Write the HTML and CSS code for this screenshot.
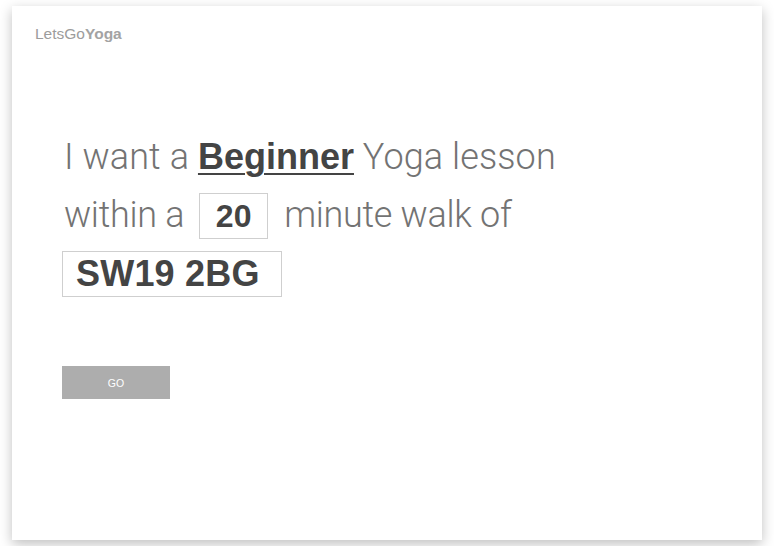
FILE: index.html
```html
<!DOCTYPE html>
<html lang="en">
<head>
<meta charset="utf-8">
<title>LetsGoYoga</title>
<link rel="stylesheet" href="styles.css">
</head>
<body>
<div class="card">
  <header class="logo">LetsGo<b>Yoga</b></header>
  <main class="query">
    <div class="row">I want a <a class="level" href="#">Beginner</a> Yoga lesson</div>
    <div class="row">
      <span>within a</span>
      <span class="field field-min">20</span>
      <span>minute walk of</span>
    </div>
    <div class="row">
      <span class="field field-post">SW19 2BG</span>
    </div>
    <button class="go" type="button">GO</button>
  </main>
</div>
</body>
</html>
```
FILE: styles.css
```css
html, body {
  margin: 0;
  background: #ffffff;
}
body {
  padding: 6px 12px;
  font-family: "Roboto", "Liberation Sans", sans-serif;
}
.card {
  width: 750px;
  height: 534px;
  box-sizing: border-box;
  background: #fff;
  box-shadow: 0 4px 12px rgba(0, 0, 0, 0.25);
  padding: 19px 0 0 23px;
}
.logo {
  font-family: "Liberation Sans", Arial, sans-serif;
  font-size: 15.5px;
  line-height: 18px;
  color: #9c9c9c;
}
.logo b {
  color: #a3a3a3;
  font-weight: bold;
}
.query {
  margin: 91px 0 0 27px;
  display: flex;
  flex-direction: column;
  align-items: flex-start;
  gap: 12px;
}
.row {
  display: flex;
  align-items: baseline;
  font-size: 36px;
  font-weight: 300;
  line-height: 46px;
  color: #737373;
  white-space: pre;
  padding-left: 2px;
  letter-spacing: 0.1px;
}
.row:nth-child(2) {
  letter-spacing: -0.3px;
}
.row:nth-child(3) {
  padding-left: 0;
}
.level {
  font-family: "Liberation Sans", Arial, sans-serif;
  font-weight: bold;
  color: #444;
  letter-spacing: 0;
  text-decoration: underline;
  text-decoration-thickness: 2px;
  text-underline-offset: 4px;
}
.field {
  font-family: "Liberation Sans", Arial, sans-serif;
  font-weight: bold;
  color: #444;
  border: 1px solid #cfcfcf;
  line-height: 44px;
  text-align: center;
  letter-spacing: 0;
}
.field-min {
  font-size: 32px;
  width: 67px;
  margin: 0 16px 0 15px;
}
.field-post {
  font-size: 36px;
  width: 218px;
  box-sizing: content-box;
  text-align: left;
  padding-left: 13px;
  width: 205px;
  letter-spacing: 0.2px;
}
.go {
  margin-top: 57px;
  margin-left: 0;
  width: 108px;
  height: 33px;
  border: 0;
  background: #adadad;
  color: #fff;
  font-family: "Liberation Sans", Arial, sans-serif;
  font-size: 10.5px;
  padding: 0;
}
```
